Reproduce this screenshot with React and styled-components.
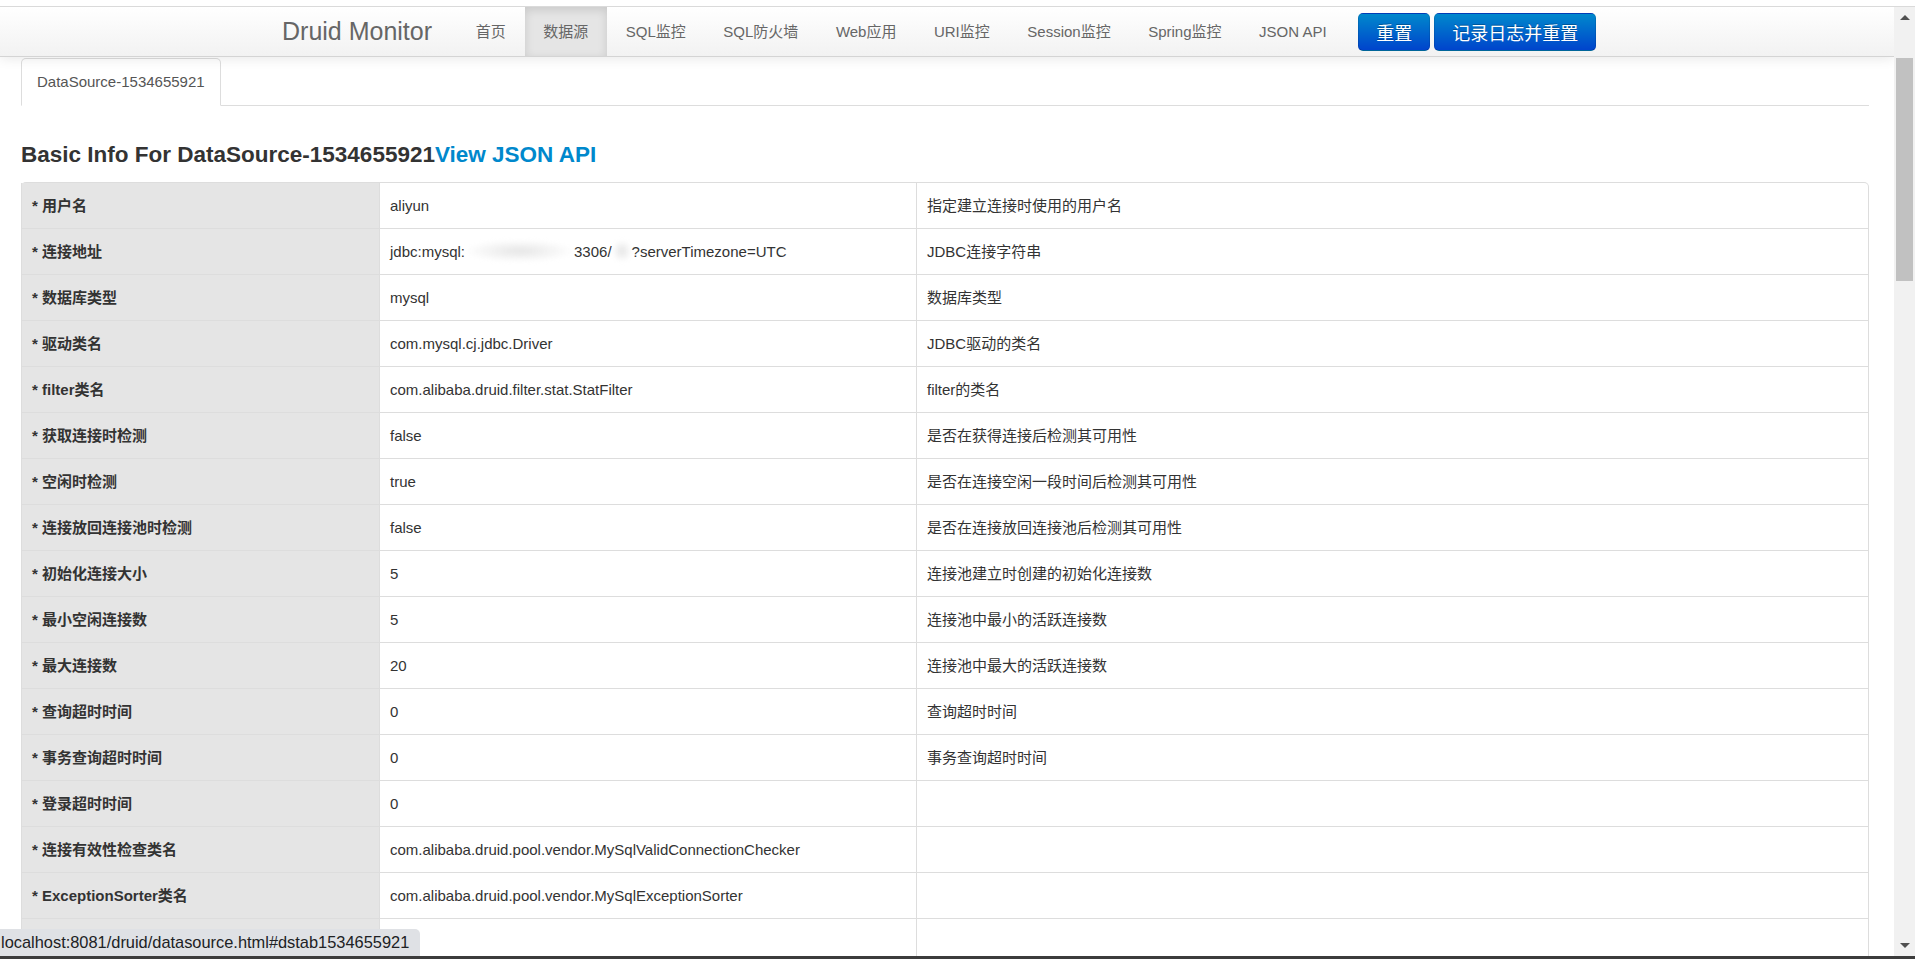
import React from "react";
import styled, { createGlobalStyle } from "styled-components";

const GlobalStyle = createGlobalStyle`
  html, body {
    margin: 0;
    padding: 0;
    overflow: hidden;
    background: #fff;
  }
  body {
    font-family: "Liberation Sans", Arial, "Noto Sans CJK SC", sans-serif;
    font-size: 15px;
    line-height: 25px;
    color: #333;
  }
`;

const Window = styled.div`
  position: relative;
  width: 1915px;
  height: 959px;
  display: flex;
  flex-direction: column;
  overflow: hidden;
`;

const ChromeLine = styled.div`
  flex-shrink: 0;
  height: 6px;
  background: #fff;
  border-bottom: 1px solid #dadada;
`;

const Screen = styled.div`
  flex: 1;
  min-height: 0;
  display: flex;
`;

const Page = styled.div`
  flex: 1;
  min-width: 0;
  overflow: hidden;
`;

const Navbar = styled.nav`
  position: relative;
  z-index: 2;
  height: 49px;
  display: flex;
  align-items: center;
  padding-left: 257px;
  background: linear-gradient(#ffffff, #f2f2f2);
  border-bottom: 1px solid #d4d4d4;
  box-shadow: 0 1px 12px rgba(0, 0, 0, 0.1);
`;

const Brand = styled.a`
  padding: 0 25px;
  font-size: 25px;
  line-height: 49px;
  color: #666;
  text-decoration: none;
`;

const NavList = styled.ul`
  display: flex;
  height: 100%;
  margin: 0;
  padding: 0;
  list-style: none;
`;

const NavLink = styled.a`
  display: flex;
  align-items: center;
  height: 49px;
  padding: 0 18.75px;
  font-size: 15px;
  color: #666;
  text-decoration: none;
  background: ${props => (props.$active ? "#e5e5e5" : "transparent")};
  box-shadow: ${props => (props.$active ? "inset 0 3px 10px rgba(0, 0, 0, 0.125)" : "none")};
`;

const ButtonGroup = styled.div`
  display: flex;
  gap: 4px;
  margin-left: 13px;
`;

const PrimaryButton = styled.button`
  height: 38px;
  padding: 0 17px;
  font-family: inherit;
  font-size: 18px;
  color: #fff;
  background: linear-gradient(#0088cc, #0044cc);
  border: 1px solid;
  border-color: rgba(0, 0, 0, 0.1) rgba(0, 0, 0, 0.1) rgba(0, 0, 0, 0.25);
  border-radius: 5px;
  text-shadow: 0 -1px 0 rgba(0, 0, 0, 0.25);
  cursor: pointer;
`;

const Content = styled.div`
  padding: 1px 25px 0 21px;
`;

const TabBar = styled.ul`
  display: flex;
  margin: 0;
  padding: 0;
  list-style: none;
  border-bottom: 1px solid #ddd;
`;

const Tab = styled.a`
  display: block;
  margin-bottom: -1px;
  padding: 0 15px;
  line-height: 46px;
  color: #555;
  text-decoration: none;
  background: #fff;
  border: 1px solid #ddd;
  border-bottom-color: transparent;
  border-radius: 5px 5px 0 0;
`;

const Heading = styled.h3`
  margin: 37px 0 15px;
  font-size: 22.5px;
  line-height: 24px;
  font-weight: bold;
  color: #333;
`;

const ApiLink = styled.a`
  color: #0088cc;
  text-decoration: none;
`;

const InfoTable = styled.table`
  width: 100%;
  table-layout: fixed;
  border-collapse: separate;
  border-spacing: 0;
  border: 1px solid #ddd;
  border-left: 0;
  border-radius: 5px;
`;

const Cell = styled.td`
  height: 25px;
  padding: 10px;
  line-height: 25px;
  text-align: left;
  vertical-align: top;
  white-space: nowrap;
  border-left: 1px solid #ddd;
  border-top: 1px solid #ddd;
  tr:first-child > & {
    border-top: 0;
  }
`;

const LabelCell = styled(Cell)`
  font-weight: bold;
  background: #e5e5e5;
`;

const Blur = styled.span`
  display: inline-block;
  width: ${props => props.$w}px;
  height: 22px;
  vertical-align: -5px;
  background: radial-gradient(ellipse at center, rgba(228, 228, 228, 0.95), rgba(255, 255, 255, 0) 72%);
  filter: blur(2px);
`;

const Scrollbar = styled.div`
  flex-shrink: 0;
  width: 21px;
  display: flex;
  flex-direction: column;
  background: #f1f1f1;
`;

const ArrowButton = styled.div`
  height: 21px;
  display: flex;
  align-items: center;
  justify-content: center;
  &::before {
    content: "";
    border-left: 5px solid transparent;
    border-right: 5px solid transparent;
    ${props => (props.$down ? "border-top: 5px solid #505050;" : "border-bottom: 5px solid #505050;")}
  }
`;

const Track = styled.div`
  flex: 1;
  padding-top: 30px;
`;

const Thumb = styled.div`
  height: 223px;
  margin: 0 2px;
  background: #c1c1c1;
`;

const StatusBubble = styled.div`
  position: absolute;
  left: 0;
  bottom: 3px;
  height: 27px;
  padding: 0 11px 0 1px;
  font-size: 16.4px;
  line-height: 27px;
  color: #202124;
  background: #dfe1e5;
  border-top-right-radius: 5px;
`;

const BottomEdge = styled.div`
  flex-shrink: 0;
  height: 3px;
  background: #3c3c3c;
`;

const navItems = ["首页", "数据源", "SQL监控", "SQL防火墙", "Web应用", "URI监控", "Session监控", "Spring监控", "JSON API"];

const rows = [
  ["* 用户名", "aliyun", "指定建立连接时使用的用户名"],
  ["* 连接地址", "url", "JDBC连接字符串"],
  ["* 数据库类型", "mysql", "数据库类型"],
  ["* 驱动类名", "com.mysql.cj.jdbc.Driver", "JDBC驱动的类名"],
  ["* filter类名", "com.alibaba.druid.filter.stat.StatFilter", "filter的类名"],
  ["* 获取连接时检测", "false", "是否在获得连接后检测其可用性"],
  ["* 空闲时检测", "true", "是否在连接空闲一段时间后检测其可用性"],
  ["* 连接放回连接池时检测", "false", "是否在连接放回连接池后检测其可用性"],
  ["* 初始化连接大小", "5", "连接池建立时创建的初始化连接数"],
  ["* 最小空闲连接数", "5", "连接池中最小的活跃连接数"],
  ["* 最大连接数", "20", "连接池中最大的活跃连接数"],
  ["* 查询超时时间", "0", "查询超时时间"],
  ["* 事务查询超时时间", "0", "事务查询超时时间"],
  ["* 登录超时时间", "0", ""],
  ["* 连接有效性检查类名", "com.alibaba.druid.pool.vendor.MySqlValidConnectionChecker", ""],
  ["* ExceptionSorter类名", "com.alibaba.druid.pool.vendor.MySqlExceptionSorter", ""],
  ["", "", ""],
];

const UrlValue = () => (
  <>
    jdbc:mysql:<Blur $w={109} />3306/<Blur $w={20} />?serverTimezone=UTC
  </>
);

const App = () => {
  return (
    <Window>
      <GlobalStyle />
      <ChromeLine />
      <Screen>
        <Page>
          <Navbar>
            <Brand href="#">Druid Monitor</Brand>
            <NavList>
              {navItems.map(item => (
                <li key={item}>
                  <NavLink href="#" $active={item === "数据源"}>{item}</NavLink>
                </li>
              ))}
            </NavList>
            <ButtonGroup>
              <PrimaryButton>重置</PrimaryButton>
              <PrimaryButton>记录日志并重置</PrimaryButton>
            </ButtonGroup>
          </Navbar>
          <Content>
            <TabBar>
              <li>
                <Tab href="#dstab1534655921">DataSource-1534655921</Tab>
              </li>
            </TabBar>
            <Heading>
              Basic Info For DataSource-1534655921<ApiLink href="#">View JSON API</ApiLink>
            </Heading>
            <InfoTable>
              <colgroup>
                <col style={{ width: 358 }} />
                <col style={{ width: 537 }} />
                <col />
              </colgroup>
              <tbody>
                {rows.map(([label, value, desc], i) => (
                  <tr key={i}>
                    <LabelCell>{label}</LabelCell>
                    <Cell>{value === "url" ? <UrlValue /> : value}</Cell>
                    <Cell>{desc}</Cell>
                  </tr>
                ))}
              </tbody>
            </InfoTable>
          </Content>
        </Page>
        <Scrollbar>
          <ArrowButton />
          <Track>
            <Thumb />
          </Track>
          <ArrowButton $down />
        </Scrollbar>
      </Screen>
      <BottomEdge />
      <StatusBubble>localhost:8081/druid/datasource.html#dstab1534655921</StatusBubble>
    </Window>
  );
};

export default App;
